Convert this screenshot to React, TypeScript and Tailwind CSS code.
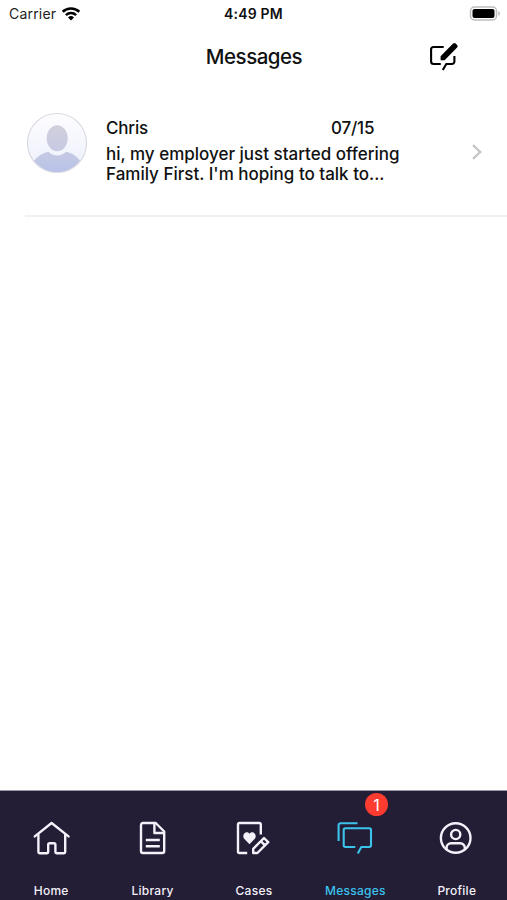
import { ReactNode } from "react";

interface Message {
  id: string;
  name: string;
  date: string;
  preview: string[];
}

interface Tab {
  label: string;
  icon: ReactNode;
  badge?: number;
}

const messages: Message[] = [
  {
    id: "1",
    name: "Chris",
    date: "07/15",
    preview: ["hi, my employer just started offering", "Family First. I'm hoping to talk to..."],
  },
];

const tabs: Tab[] = [
  {
    label: "Home",
    icon: (
      <>
        <path d="M3.8 16.4 20.6 3 37.5 16.4" />
        <path d="M7.4 15v17a1.2 1.2 0 0 0 1.2 1.2h7.4a1.2 1.2 0 0 0 1.2-1.2v-7.3a1.5 1.5 0 0 1 1.5-1.5h4.2a1.5 1.5 0 0 1 1.5 1.5V32a1.2 1.2 0 0 0 1.2 1.2h7.4A1.2 1.2 0 0 0 34.2 32V15" />
      </>
    ),
  },
  {
    label: "Library",
    icon: (
      <>
        <path d="M11 3h12.7l8.5 8.5V31a2 2 0 0 1-2 2H11a2 2 0 0 1-2-2V5a2 2 0 0 1 2-2Z" />
        <path d="M22.4 3v10h9.8M13.8 20h14M13.8 26.2h14" strokeLinecap="butt" />
      </>
    ),
  },
  {
    label: "Cases",
    icon: (
      <>
        <path
          d="M14.2 33H6.4A1.4 1.4 0 0 1 5 31.6V4.4A1.4 1.4 0 0 1 6.4 3h20a1.4 1.4 0 0 1 1.4 1.4v10"
          strokeLinecap="butt"
        />
        <path d="M16.5 24.2 11.4 19c-3.4-4 1.8-9.2 5.1-5.2 3.3-4 8.5 1.2 5.1 5.2Z" fill="currentColor" stroke="none" />
        <path d="M20.2 33v-4.2L31 18l4.2 4.2L24.4 33ZM27.8 21.2l4.2 4.2" />
      </>
    ),
  },
  {
    label: "Messages",
    badge: 1,
    icon: (
      <>
        <path d="M22.5 3.2H5.6a2 2 0 0 0-2 2V21" strokeLinecap="butt" strokeWidth={2.1} />
        <path
          d="M20.3 27H10.400a1.700 1.700 0 0 1-1.700-1.700V10a1.700 1.700 0 0 1 1.700-1.700h23.900A1.700 1.700 0 0 1 36 10v15.300a1.700 1.700 0 0 1-1.700 1.700h-8l-3.500 6.400"
          strokeLinecap="butt"
          strokeWidth={2.1}
        />
      </>
    ),
  },
  {
    label: "Profile",
    icon: (
      <>
        <circle cx="19.7" cy="18" r="14.8" />
        <circle cx="19.7" cy="14.5" r="4.6" />
        <path d="M10.6 29.3v-1.5a4.500 4.500 0 0 1 4.500-4.500h9.200a4.500 4.500 0 0 1 4.500 4.500v1.500" />
      </>
    ),
  },
];

const StatusBar = () => (
  <div className="grid h-7 grid-cols-3 items-center">
    <div className="flex items-center gap-[5px] pl-[9px]">
      <span className="text-[14px] leading-7 tracking-[0.2px] text-[#222]">Carrier</span>
      <svg width="20" height="15" viewBox="0 0 20 15" fill="none" stroke="#000" strokeWidth="2.6">
        <path d="M1.7 4.800a12 12 0 0 1 16.600 0" />
        <path d="M4.900 8.100a7.400 7.400 0 0 1 10.200 0" />
        <path d="m10 13.500-3-3a4.300 4.300 0 0 1 6 0Z" fill="#000" stroke="none" />
      </svg>
    </div>
    <span className="text-center text-[14px] leading-7 font-semibold tracking-[0.2px] whitespace-nowrap text-[#111]">
      4:49 PM
    </span>
    <div className="flex justify-end pr-[6px]">
      <svg width="32" height="16" viewBox="0 0 32 16">
        <rect x="1.5" y="1" width="26" height="13" rx="4" fill="#fff" stroke="#bdbdbd" strokeWidth="1.5" />
        <rect x="3.5" y="3" width="22" height="9" rx="2" fill="#000" />
        <path d="M29.300 5c2.200 1 2.200 4 0 5Z" fill="#bdbdbd" />
      </svg>
    </div>
  </div>
);

const Header = () => (
  <header className="grid h-[57px] grid-cols-[1fr_auto_1fr] items-center">
    <h1 className="col-start-2 pl-px text-[20.5px] leading-[57px] font-medium tracking-[-0.5px] text-[#111]">
      Messages
    </h1>
    <button className="mr-[47px] justify-self-end" aria-label="New message">
      <svg width="32" height="32" viewBox="0 0 32 32" fill="none" stroke="#000" strokeWidth="2.1">
        <path d="M15.700 6H5.600a2.500 2.500 0 0 0-2.500 2.500v12a2.500 2.500 0 0 0 2.500 2.500h7.200" />
        <path d="m14.800 29 3.500-6h5.600a2.500 2.500 0 0 0 2.500-2.500V15" />
        <path
          d="M12.600 19.200v-4L25.100 2.600a1.700 1.700 0 0 1 2.500 0l1.500 1.500a1.700 1.700 0 0 1 0 2.500L16.600 19.200Z"
          fill="#000"
          stroke="none"
        />
      </svg>
    </button>
  </header>
);

const Avatar = () => (
  <svg width="62" height="62" viewBox="0 0 62 62" className="shrink-0">
    <defs>
      <linearGradient id="avatarBg" x1="0" y1="0" x2="0" y2="1">
        <stop offset="0" stopColor="#fdfdff" />
        <stop offset="1" stopColor="#edf0fb" />
      </linearGradient>
      <linearGradient id="avatarHead" x1="0" y1="0" x2="0" y2="1">
        <stop offset="0" stopColor="#d1cfdc" />
        <stop offset="1" stopColor="#c6cae3" />
      </linearGradient>
      <linearGradient id="avatarBody" x1="0" y1="0" x2="0" y2="1">
        <stop offset="0" stopColor="#c6cae3" />
        <stop offset="1" stopColor="#b7c2e9" />
      </linearGradient>
      <clipPath id="avatarClip">
        <circle cx="31" cy="31" r="29.5" />
      </clipPath>
    </defs>
    <circle cx="31" cy="31" r="29.5" fill="url(#avatarBg)" />
    <g clipPath="url(#avatarClip)">
      <path d="M6 52c4-7 10-11 16.500-12.300 5 5 12.500 5 17.500 0C46.500 41 52.500 45 56 52v10H6Z" fill="url(#avatarBody)" />
      <ellipse cx="31.2" cy="26.3" rx="10.500" ry="13" fill="url(#avatarHead)" />
    </g>
    <circle cx="31" cy="31" r="29.5" fill="none" stroke="#d9d9e2" strokeWidth="1.2" />
  </svg>
);

const MessageRow = ({ message }: { message: Message }) => (
  <li className="ml-[25px] flex h-[132px] border-b-2 border-[#f0f0f1] pt-[27px] pl-[1px]">
    <Avatar />
    <div className="ml-[18px] w-[330px] text-[17px] leading-5 font-medium text-[#111]">
      <div className="flex pt-[6px]">
        <span className="w-[225px] tracking-[-0.2px]">{message.name}</span>
        <span className="tracking-[-0.2px]">{message.date}</span>
      </div>
      <p className="mt-[6px] whitespace-nowrap">
        {message.preview.map((line) => (
          <span key={line} className="block">
            {line}
          </span>
        ))}
      </p>
    </div>
    <svg
      className="mt-[31px] ml-[35px]"
      width="12"
      height="18"
      viewBox="0 0 12 18"
      fill="none"
      stroke="#c5c5c7"
      strokeWidth="2.3"
    >
      <path d="m2 2.200 7.200 6.800L2 15.800" />
    </svg>
  </li>
);

const TabBar = ({ active }: { active: string }) => (
  <nav className="grid h-[110px] grid-cols-5 border-t border-[#9a97a8] bg-[#231d35]">
    {tabs.map((tab) => (
      <button
        key={tab.label}
        className={`flex flex-col items-center pt-[29px] ${tab.label === active ? "text-[#3cc3ec]" : "text-[#f4f1fa]"}`}
      >
        <span className="relative">
          <svg
            width="40"
            height="36"
            viewBox="0 0 40 36"
            fill="none"
            stroke="currentColor"
            strokeWidth="2.4"
            strokeLinecap="round"
            strokeLinejoin="round"
          >
            {tab.icon}
          </svg>
          {tab.badge && (
            <span className="absolute -top-[27px] left-[30px] flex size-[23px] items-center justify-center rounded-full bg-[#fd3b31] text-[16px] leading-none text-white">
              {tab.badge}
            </span>
          )}
        </span>
        <span className="mt-[27px] pl-px text-[12px] leading-4 font-medium tracking-[0.25px]">{tab.label}</span>
      </button>
    ))}
  </nav>
);

export default function App() {
  return (
    <div className="flex h-[900px] w-[507px] flex-col overflow-hidden bg-white font-['Inter',sans-serif]">
      <StatusBar />
      <Header />
      <ul className="flex-1">
        {messages.map((message) => (
          <MessageRow key={message.id} message={message} />
        ))}
      </ul>
      <TabBar active="Messages" />
    </div>
  );
}
